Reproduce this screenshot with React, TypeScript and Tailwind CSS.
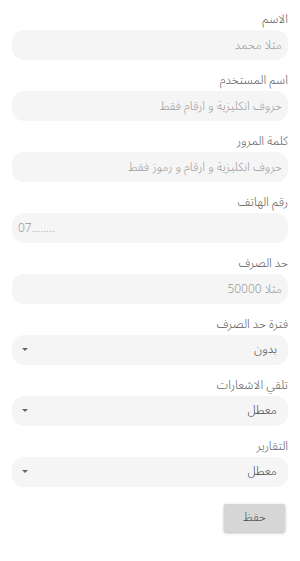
import React from 'react'

const font = { fontFamily: '"Noto Sans Arabic", "DejaVu Sans", sans-serif' }

function Field({ label, placeholder, ltr }: { label: string; placeholder: string; ltr?: boolean }) {
  return (
    <div className="flex flex-col">
      <label className="text-right text-[12px] leading-4 font-light text-[#555] mb-[2px]">{label}</label>
      <input
        dir={ltr ? 'ltr' : 'rtl'}
        placeholder={placeholder}
        className={`h-[30px] w-full rounded-[12px] bg-[#f5f5f5] text-[12px] font-light text-[#444] placeholder:text-[#9a9a9a] outline-none ${ltr ? 'pl-[6px]' : 'pr-[6px]'}`}
      />
    </div>
  )
}

function SelectField({ label, value }: { label: string; value: string }) {
  return (
    <div className="flex flex-col">
      <label className="text-right text-[12px] leading-4 font-light text-[#555] mb-[2px]">{label}</label>
      <div className="h-[30px] w-full rounded-[12px] bg-[#f5f5f5] flex items-center justify-between pl-[10px] pr-[11px]">
        <svg width="6" height="4" viewBox="0 0 6 4" className="text-[#666]">
          <path d="M0 0 L6 0 L3 3 Z" fill="currentColor" />
        </svg>
        <span dir="rtl" className="text-[12px] font-light text-[#444]">{value}</span>
      </div>
    </div>
  )
}

export default function App() {
  return (
    <div className="w-[300px] h-[561px] bg-white" style={font}>
      <form className="flex flex-col gap-[13px] px-3 pt-3">
        <Field label="الاسم" placeholder="مثلا محمد" />
        <Field label="اسم المستخدم" placeholder="حروف انكليزية و ارقام فقط" />
        <Field label="كلمة المرور" placeholder="حروف انكليزية و ارقام و رموز فقط" />
        <Field label="رقم الهاتف" placeholder="07........" ltr />
        <Field label="حد الصرف" placeholder="مثلا 50000" />
        <SelectField label="فترة حد الصرف" value="بدون" />
        <SelectField label="تلقي الاشعارات" value="معطل" />
        <SelectField label="التقارير" value="معطل" />
        <div className="flex justify-end mt-[4px] pr-[3px]">
          <button
            type="button"
            className="w-[61px] h-[28px] rounded-[2px] bg-[#d6d6d6] text-[12px] font-light text-[#444] shadow-[0_1px_3px_rgba(0,0,0,0.3)]"
          >
            حفظ
          </button>
        </div>
      </form>
    </div>
  )
}
